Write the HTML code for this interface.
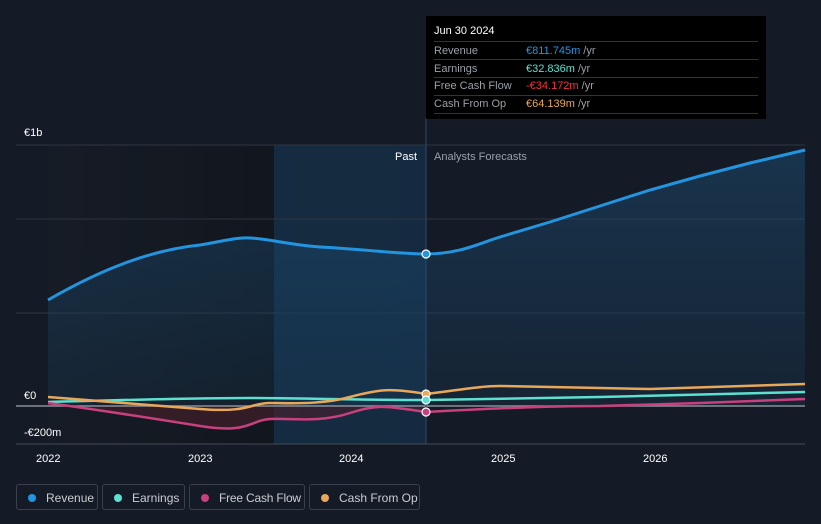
<!DOCTYPE html><html><head><style>body{margin:0;background:#151b26;font-family:"Liberation Sans",sans-serif;}
.t{position:absolute;left:426px;top:16px;width:340px;height:103px;background:#000;}
.leg{position:absolute;top:484px;height:26px;border:1px solid #3a414d;border-radius:3px;color:#c9ccd1;font-size:12px;line-height:26px;box-sizing:border-box;white-space:nowrap}
.leg i{display:inline-block;width:8px;height:8px;border-radius:50%;margin:0 10px 0 11px;}
</style></head><body>
<div style="position:relative;width:821px;height:524px;overflow:hidden">
<svg width="821" height="524" style="position:absolute;left:0;top:0">
<defs><linearGradient id="p" x1="0" x2="1"><stop offset="0" stop-color="#161c26"/><stop offset="1" stop-color="#0f1319"/></linearGradient>
<linearGradient id="r" x1="0" y1="0" x2="0" y2="1"><stop offset="0" stop-color="#1b4a70" stop-opacity=".75"/><stop offset="1" stop-color="#1b4a70" stop-opacity=".25"/></linearGradient></defs>
<rect x="48" y="145" width="378" height="299" fill="url(#p)"/>
<rect x="274" y="145" width="152" height="299" fill="#16314a" opacity=".8"/>
<g stroke="#2d3440" stroke-width="1"><line x1="16" y1="145" x2="805" y2="145"/><line x1="16" y1="219" x2="805" y2="219"/><line x1="16" y1="313" x2="805" y2="313"/><line x1="16" y1="444" x2="805" y2="444" stroke="#444b56"/></g>
<path d="M48,300 C100,270 150,250 200,245 C220,242 235,237 250,238 C270,239 290,245 320,247 C360,249 400,254 426,254 C460,254 480,243 500,237 L550,222 L600,206 L650,190 L700,176 L750,163 L805,150 L805,406 L48,406Z" fill="url(#r)" opacity=".7"/>
<path d="M48,403 C100,410 150,418 200,426 S250,420 270,419 S320,423 350,413 S390,407 426,412 L426,406 L48,406Z" fill="#4a1f2c" opacity=".6"/>
<line x1="16" y1="406" x2="805" y2="406" stroke="#8a8f98" stroke-width="1.5"/>
<line x1="426" y1="118" x2="426" y2="444" stroke="#2a4a6a"/>
<path d="M48,300 C100,270 150,250 200,245 C220,242 235,237 250,238 C270,239 290,245 320,247 C360,249 400,254 426,254 C460,254 480,243 500,237 L550,222 L600,206 L650,190 L700,176 L750,163 L805,150" fill="none" stroke="#2394e0" stroke-width="3"/>
<path d="M48,402 C120,400 200,398 250,398 S350,400 426,400 L600,397 L805,392" fill="none" stroke="#5ce0d0" stroke-width="2.5"/>
<path d="M48,403 C100,410 150,418 200,426 S250,420 270,419 S320,423 350,413 S390,407 426,412 C480,409 550,406 600,406 L700,403 L805,399" fill="none" stroke="#c8407e" stroke-width="2.5"/>
<path d="M48,397 C100,401 150,405 200,409 S250,403 270,403 S320,405 350,397 S390,388 426,394 C460,390 480,386 500,386 L650,389 L805,384" fill="none" stroke="#e8a85a" stroke-width="2.5"/>
<g stroke="#fff" stroke-width="1.2"><circle cx="426" cy="254" r="4" fill="#2394e0"/><circle cx="426" cy="394" r="4" fill="#e8a85a"/><circle cx="426" cy="400" r="4" fill="#5ce0d0"/><circle cx="426" cy="412" r="4" fill="#c8407e"/></g>
<g font-size="11" fill="#fff"><text x="24" y="136">€1b</text><text x="24" y="399">€0</text><text x="24" y="436">-€200m</text>
<text x="36" y="462">2022</text><text x="188" y="462">2023</text><text x="339" y="462">2024</text><text x="491" y="462">2025</text><text x="643" y="462">2026</text>
<text x="395" y="160" font-size="11">Past</text><text x="434" y="160" fill="#9aa0a8">Analysts Forecasts</text></g>
</svg>
<div class="t" style="font-size:11px;color:#9aa0a8">
<div style="color:#fff;position:absolute;left:8px;top:9px">Jun 30 2024</div>
<div style="position:absolute;left:8px;right:8px;top:25px;border-top:1px solid #333"></div>
<div style="position:absolute;left:8px;top:27px;line-height:17.5px">Revenue<br>Earnings<br>Free Cash Flow<br>Cash From Op</div>
<div style="position:absolute;left:100px;top:27px;line-height:17.5px"><span style="color:#2394e0">€811.745m</span> /yr<br><span style="color:#5ce0d0">€32.836m</span> /yr<br><span style="color:#f0363a">-€34.172m</span> /yr<br><span style="color:#e8a85a">€64.139m</span> /yr</div>
<div style="position:absolute;left:8px;right:8px;top:43px;border-top:1px solid #333"></div>
<div style="position:absolute;left:8px;right:8px;top:61px;border-top:1px solid #333"></div>
<div style="position:absolute;left:8px;right:8px;top:79px;border-top:1px solid #333"></div>
<div style="position:absolute;left:8px;right:8px;top:97px;border-top:1px solid #333"></div>
</div>
<div class="leg" style="left:16px;width:82px"><i style="background:#2394e0"></i>Revenue</div>
<div class="leg" style="left:102px;width:83px"><i style="background:#5ce0d0"></i>Earnings</div>
<div class="leg" style="left:189px;width:116px;letter-spacing:-.2px"><i style="background:#c8407e"></i>Free Cash Flow</div>
<div class="leg" style="left:309px;width:111px"><i style="background:#e8a85a"></i>Cash From Op</div>
</div></body></html>
